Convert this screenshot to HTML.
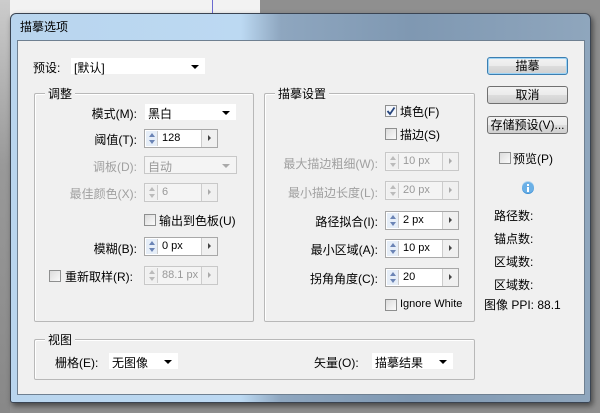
<!DOCTYPE html>
<html><head><meta charset="utf-8"><style>
*{margin:0;padding:0;box-sizing:border-box}
body{width:600px;height:413px;position:relative;overflow:hidden;background:#8f8f8f;font-family:"Liberation Sans","Noto Sans CJK SC",sans-serif;font-size:12px;color:#000}
.a{position:absolute;white-space:nowrap}
.bgl{position:absolute;left:0;top:0;width:260px;height:40px;background:#f2f2f2}
.win{position:absolute;left:10px;top:13px;width:581px;height:390px;border:1px solid #3a4452;border-radius:6px 6px 3px 3px;background:linear-gradient(90deg,#b9d5ee 0,#bcd9f2 230px,#8ea6bf 270px,#7f98b2 400px,#8fa6bd 100%);box-shadow:2px 3px 6px rgba(0,0,0,.5)}
.client{position:absolute;left:17px;top:40px;width:568px;height:355px;background:#f0f0f0;border:1px solid #6f8091}
.grp{position:absolute;border:1px solid #b8b8b8;border-radius:2px;box-shadow:1px 1px 0 #fff inset}
.gt{position:absolute;background:#f0f0f0;padding:0 3px;top:-9px;font-size:12px}
.lab{position:absolute;text-align:right;white-space:nowrap}
.dis{color:#a0a0a0}
.sel{position:absolute;height:18px;background:#fff;border:1px solid #f0f0f0;}
.sel span{position:absolute;left:3px;top:1px}
.sel i{position:absolute;right:6px;top:7px;width:0;height:0;border-left:4px solid transparent;border-right:4px solid transparent;border-top:4px solid #000}
.sel.d{background:#f4f4f4;border:1px solid #c8c8c8;color:#999}
.sel.d i{border-top-color:#aaa}
.spin{position:absolute;height:19px;width:74px;background:#fff;border:1px solid #a8a8a8;font-size:11px}
.spin .ud{position:absolute;left:1px;top:1px;width:12px;height:15px;background:#e6eef8;border-right:1px solid #ccc}
.spin .ud:before{content:"";position:absolute;left:3px;top:2px;border-left:3px solid transparent;border-right:3px solid transparent;border-bottom:4px solid #6b84b5}
.spin .ud:after{content:"";position:absolute;left:3px;top:9px;border-left:3px solid transparent;border-right:3px solid transparent;border-top:4px solid #6b84b5}
.spin span{position:absolute;left:17px;top:2px}
.spin .rt{position:absolute;right:0;top:0;width:16px;height:17px;background:#f0f0f0;border-left:1px solid #ccc}
.spin .rt:after{content:"";position:absolute;left:6px;top:5px;border-top:3px solid transparent;border-bottom:3px solid transparent;border-left:3px solid #444}
.spin.d{color:#999;border-color:#c8c8c8;background:#f4f4f4}
.spin.d .ud{background:#f0f0f0}
.spin.d .ud:before{border-bottom-color:#bbb}.spin.d .ud:after{border-top-color:#bbb}
.spin.d .rt:after{border-left-color:#aaa}
.cb{position:absolute;width:12px;height:12px;border:1px solid #8e8f8f;background:linear-gradient(135deg,#dcdcdc,#fafafa)}
.btn{position:absolute;left:487px;width:81px;height:18px;border:1px solid #707070;border-radius:3px;background:linear-gradient(#f2f2f2,#ebebeb 50%,#dddddd 51%,#cfcfcf);text-align:center;line-height:16px}
</style></head><body>
<div class="bgl"></div>
<div class="a" style="left:0;top:0;width:10px;height:413px;background:linear-gradient(#ccc,#999 40%,#888)"></div>
<div class="a" style="left:212px;top:0;width:1px;height:13px;background:#6a6ad0"></div>
<div class="win"></div>
<div class="a" style="left:20px;top:18px;font-size:12px;color:#000">描摹选项</div>
<div class="client"></div>

<div class="a" style="left:33px;top:59px">预设:</div>
<div class="sel" style="left:70px;top:57px;width:136px"><span>[默认]</span><i></i></div>

<div class="grp" style="left:34px;top:93px;width:220px;height:229px"><div class="gt" style="left:10px">调整</div></div>
<div class="lab" style="left:60px;width:77px;top:105px">模式(M):</div>
<div class="sel" style="left:144px;top:103px;width:93px"><span>黑白</span><i></i></div>
<div class="lab" style="left:60px;width:77px;top:131px">阈值(T):</div>
<div class="spin" style="left:144px;top:129px"><div class="ud"></div><span>128</span><div class="rt"></div></div>
<div class="lab dis" style="left:60px;width:77px;top:158px">调板(D):</div>
<div class="sel d" style="left:144px;top:156px;width:93px"><span>自动</span><i></i></div>
<div class="lab dis" style="left:40px;width:97px;top:185px">最佳颜色(X):</div>
<div class="spin d" style="left:144px;top:183px"><div class="ud"></div><span>6</span><div class="rt"></div></div>
<div class="cb" style="left:144px;top:214px"></div>
<div class="a" style="left:159px;top:212px">输出到色板(U)</div>
<div class="lab" style="left:60px;width:77px;top:240px">模糊(B):</div>
<div class="spin" style="left:144px;top:237px"><div class="ud"></div><span>0 px</span><div class="rt"></div></div>
<div class="cb" style="left:49px;top:270px"></div>
<div class="a" style="left:65px;top:268px">重新取样(R):</div>
<div class="spin d" style="left:144px;top:266px"><div class="ud"></div><span>88.1 px</span><div class="rt"></div></div>

<div class="grp" style="left:264px;top:93px;width:211px;height:229px"><div class="gt" style="left:10px">描摹设置</div></div>
<div class="cb" style="left:385px;top:105px;background:#f4f6fa"><svg width="10" height="10" style="position:absolute;left:0;top:0"><path d="M1.5 5 L4 8 L8.5 1.5" stroke="#26457d" stroke-width="1.8" fill="none"/></svg></div>
<div class="a" style="left:400px;top:103px">填色(F)</div>
<div class="cb" style="left:385px;top:128px"></div>
<div class="a" style="left:400px;top:126px">描边(S)</div>
<div class="lab dis" style="left:270px;width:108px;top:155px">最大描边粗细(W):</div>
<div class="spin d" style="left:385px;top:152px"><div class="ud"></div><span>10 px</span><div class="rt"></div></div>
<div class="lab dis" style="left:270px;width:108px;top:184px">最小描边长度(L):</div>
<div class="spin d" style="left:385px;top:181px"><div class="ud"></div><span>20 px</span><div class="rt"></div></div>
<div class="lab" style="left:270px;width:108px;top:213px">路径拟合(I):</div>
<div class="spin" style="left:385px;top:211px"><div class="ud"></div><span>2 px</span><div class="rt"></div></div>
<div class="lab" style="left:270px;width:108px;top:241px">最小区域(A):</div>
<div class="spin" style="left:385px;top:239px"><div class="ud"></div><span>10 px</span><div class="rt"></div></div>
<div class="lab" style="left:270px;width:108px;top:270px">拐角角度(C):</div>
<div class="spin" style="left:385px;top:268px"><div class="ud"></div><span>20</span><div class="rt"></div></div>
<div class="cb" style="left:385px;top:299px"></div>
<div class="a" style="left:400px;top:298px;font-size:11px">Ignore White</div>

<div class="grp" style="left:34px;top:339px;width:441px;height:41px"><div class="gt" style="left:10px">视图</div></div>
<div class="a" style="left:55px;top:354px">栅格(E):</div>
<div class="sel" style="left:108px;top:352px;width:71px"><span>无图像</span><i></i></div>
<div class="a" style="left:314px;top:354px">矢量(O):</div>
<div class="sel" style="left:371px;top:352px;width:83px"><span>描摹结果</span><i></i></div>

<div class="btn" style="top:57px;border-color:#3c7fb1;box-shadow:0 0 0 1px #9fd4f5 inset">描摹</div>
<div class="btn" style="top:86px">取消</div>
<div class="btn" style="top:116px">存储预设(V)...</div>
<div class="cb" style="left:499px;top:152px"></div>
<div class="a" style="left:513px;top:150px">预览(P)</div>
<svg class="a" style="left:521px;top:181px" width="14" height="14"><circle cx="7" cy="7" r="6" fill="#3b8fd6"/><circle cx="7" cy="6" r="6" fill="#8cc6f0" opacity=".6"/><rect x="6" y="6" width="2" height="5" fill="#fff"/><rect x="6" y="3" width="2" height="2" fill="#fff"/></svg>
<div class="a" style="left:494px;top:207px">路径数:</div>
<div class="a" style="left:494px;top:230px">锚点数:</div>
<div class="a" style="left:494px;top:253px">区域数:</div>
<div class="a" style="left:494px;top:276px">区域数:</div>
<div class="a" style="left:484px;top:296px">图像 PPI: 88.1</div>
</body></html>
